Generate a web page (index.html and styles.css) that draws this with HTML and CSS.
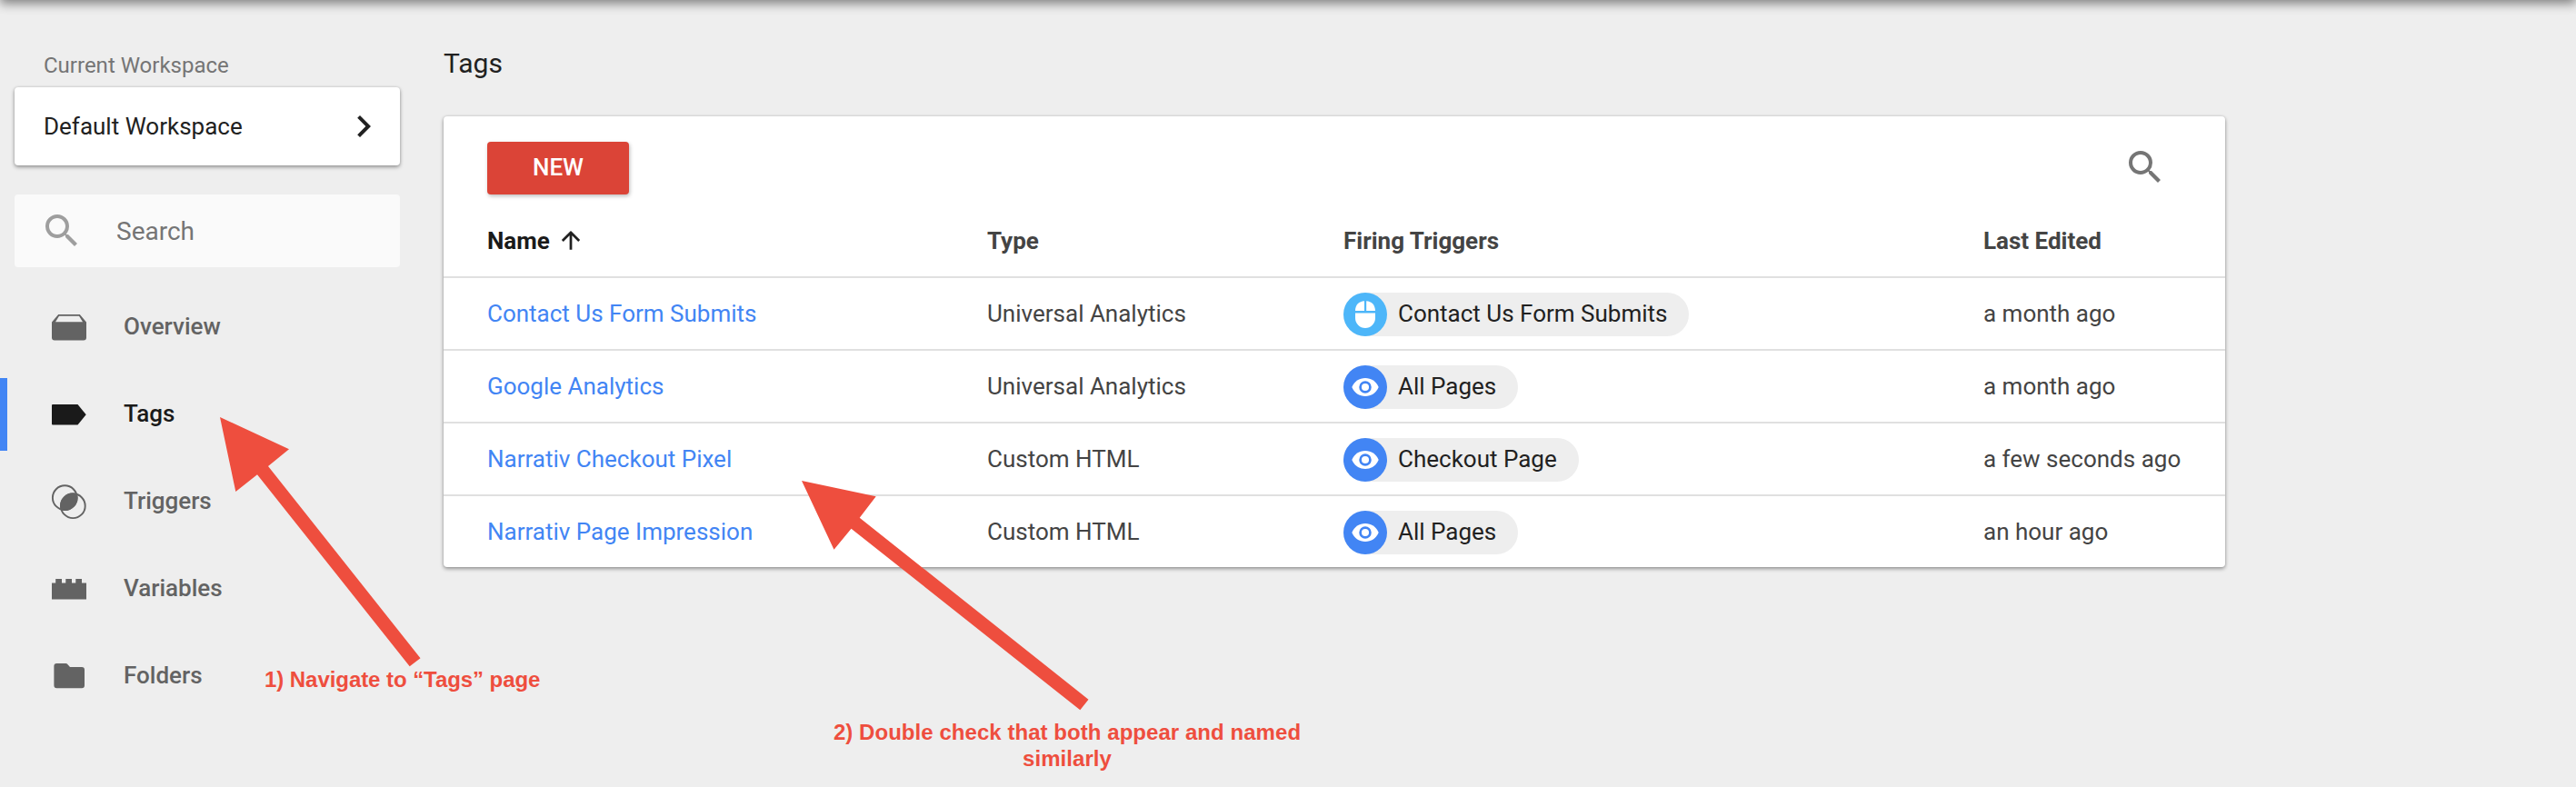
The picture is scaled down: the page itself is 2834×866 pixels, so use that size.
FILE: index.html
```html
<!DOCTYPE html>
<html lang="en">
<head>
<meta charset="utf-8">
<title>Tags</title>
<link rel="stylesheet" href="styles.css">
</head>
<body>
<div class="topbar-shadow"></div>
<div class="layout">
  <aside class="sidebar">
    <div class="workspace-label">Current Workspace</div>
    <div class="workspace">
      <span>Default Workspace</span>
      <svg class="chevron" viewBox="0 0 24 24"><path d="M10 6 8.59 7.41 13.17 12l-4.58 4.59L10 18l6-6z"/></svg>
    </div>
    <div class="search">
      <svg class="search-icon" viewBox="0 0 24 24"><path d="M15.5 14h-.79l-.28-.27A6.471 6.471 0 0 0 16 9.5 6.5 6.5 0 1 0 9.5 16c1.61 0 3.09-.59 4.23-1.57l.27.28v.79l5 4.99L20.49 19l-4.99-5zm-6 0C7.01 14 5 11.99 5 9.5S7.01 5 9.5 5 14 7.01 14 9.5 11.99 14 9.5 14z"/></svg>
      <span>Search</span>
    </div>
    <nav class="nav">
      <a class="nav-item">
        <svg class="nav-icon" viewBox="0 0 40 40"><path fill-rule="evenodd" d="M8.2 6h23.6L39 14.500V31.500a3 3 0 0 1-3 3H4a3 3 0 0 1-3-3V14.500zM9 7.700 5 14.200h30L31 7.700z"/></svg>
        <span>Overview</span>
      </a>
      <a class="nav-item active">
        <svg class="nav-icon" viewBox="0 0 40 40"><path d="M2 9h27.500L38.700 20.300 29.500 31.500H2a1 1 0 0 1-1-1V10a1 1 0 0 1 1-1z"/></svg>
        <span>Tags</span>
      </a>
      <a class="nav-item">
        <svg class="nav-icon" viewBox="0 0 40 40"><g fill="none" stroke="#636363" stroke-width="1.900"><circle cx="15.300" cy="15.700" r="13.400"/><circle cx="24.300" cy="24.700" r="13.400"/></g><path stroke="#636363" stroke-width="1.500" d="M28.100 11.900A13.400 13.400 0 0 1 11.500 28.500 13.400 13.400 0 0 1 28.100 11.900z"/></svg>
        <span>Triggers</span>
      </a>
      <a class="nav-item">
        <svg class="nav-icon" viewBox="0 0 40 40"><path d="M1 13.500h4.200V9H12v4.500h4.300V9H23v4.500h4.300V9H34v4.500h5V31.600H1z"/></svg>
        <span>Variables</span>
      </a>
      <a class="nav-item">
        <svg class="nav-icon" viewBox="0 0 40 40"><path d="M6.500 6h10a2 2 0 0 1 1.400.6L21 10h13a3 3 0 0 1 3 3v17.300a3 3 0 0 1-3 3H6.400a3 3 0 0 1-3-3V9a3 3 0 0 1 3.100-3z"/></svg>
        <span>Folders</span>
      </a>
    </nav>
  </aside>
  <main class="main">
    <h1 class="title">Tags</h1>
    <section class="card">
      <div class="toolbar">
        <button class="new">NEW</button>
        <svg class="search-icon dark" viewBox="0 0 24 24"><path d="M15.5 14h-.79l-.28-.27A6.471 6.471 0 0 0 16 9.5 6.5 6.5 0 1 0 9.5 16c1.61 0 3.09-.59 4.23-1.57l.27.28v.79l5 4.99L20.490 19l-4.990-5zm-6 0C7.010 14 5 11.990 5 9.500S7.010 5 9.500 5 14 7.010 14 9.500 11.990 14 9.500 14z"/></svg>
      </div>
      <div class="row head">
        <span class="sorted">Name <svg class="sort" viewBox="0 0 24 24"><path d="M12 22.500V2.500M2 12 12 2l10 10"/></svg></span>
        <span>Type</span><span>Firing Triggers</span><span>Last Edited</span>
      </div>
      <div class="row">
        <a>Contact Us Form Submits</a><span>Universal Analytics</span>
        <div><span class="chip"><svg class="badge" viewBox="0 0 48 48"><circle cx="24" cy="24" r="24" fill="#4db6f9"/><path fill="#fff" d="M23 9.200V20H13C13 13.500 17 9.500 23 9.200zM25.200 9.200V20H35C35 13.500 31 9.500 25.200 9.200zM13 22.500h22V28a11 11 0 0 1-22 0z"/></svg><span class="chip-label">Contact Us Form Submits</span></span></div>
        <span>a month ago</span>
      </div>
      <div class="row">
        <a>Google Analytics</a><span>Universal Analytics</span>
        <div><span class="chip"><svg class="badge" viewBox="0 0 48 48"><circle cx="24" cy="24" r="24" fill="#4285f4"/><path fill="#fff" d="M9.300 24C12 17.500 17.500 14 24 14s12 3.500 14.700 10C36 30.500 30.500 34 24 34S12 30.500 9.300 24z"/><circle cx="24" cy="24" r="5.400" fill="#fff" stroke="#4285f4" stroke-width="2.700"/></svg><span class="chip-label">All Pages</span></span></div>
        <span>a month ago</span>
      </div>
      <div class="row">
        <a>Narrativ Checkout Pixel</a><span>Custom HTML</span>
        <div><span class="chip"><svg class="badge" viewBox="0 0 48 48"><circle cx="24" cy="24" r="24" fill="#4285f4"/><path fill="#fff" d="M9.300 24C12 17.500 17.500 14 24 14s12 3.500 14.700 10C36 30.500 30.500 34 24 34S12 30.500 9.300 24z"/><circle cx="24" cy="24" r="5.400" fill="#fff" stroke="#4285f4" stroke-width="2.700"/></svg><span class="chip-label">Checkout Page</span></span></div>
        <span>a few seconds ago</span>
      </div>
      <div class="row">
        <a>Narrativ Page Impression</a><span>Custom HTML</span>
        <div><span class="chip"><svg class="badge" viewBox="0 0 48 48"><circle cx="24" cy="24" r="24" fill="#4285f4"/><path fill="#fff" d="M9.300 24C12 17.500 17.500 14 24 14s12 3.500 14.700 10C36 30.500 30.500 34 24 34S12 30.500 9.300 24z"/><circle cx="24" cy="24" r="5.400" fill="#fff" stroke="#4285f4" stroke-width="2.700"/></svg><span class="chip-label">All Pages</span></span></div>
        <span>an hour ago</span>
      </div>
    </section>
  </main>
</div>
<svg class="arrows" viewBox="0 0 2834 866"><path d="M242 459 318 494.300 295 513 462.500 724.300 450.700 733.300 283 522.300 259.300 541zM882 529 963.700 546.300 945.700 569.700 1197.500 769.700 1188.300 781.300 936.500 581.700 917.500 604.700z"/></svg>
<div class="note note-one">1) Navigate to “Tags” page</div>
<div class="note note-two">2) Double check that both appear and named similarly</div>
</body>
</html>
```

FILE: styles.css
```css
* { box-sizing: border-box; }
body {
  margin: 0;
  height: 866px;
  overflow: hidden;
  position: relative;
  background: #eee;
  color: #212121;
  font: 26px/32px Roboto, sans-serif;
}
.topbar-shadow {
  position: absolute;
  top: -20px;
  left: 0;
  right: 0;
  height: 20px;
  box-shadow: 0 4px 12px rgba(0, 0, 0, .46);
}
.layout { display: flex; gap: 48px; }
.sidebar { width: 440px; padding-top: 56px; }
.workspace-label { height: 40px; padding-left: 48px; font-size: 24px; color: #757575; }
.workspace, .search {
  display: flex;
  align-items: center;
  margin-left: 16px;
  border-radius: 4px;
}
.workspace {
  height: 86px;
  padding: 0 16px 0 32px;
  justify-content: space-between;
  background: #fff;
  box-shadow: 0 2px 4px rgba(0, 0, 0, .36), 0 0 3px rgba(0, 0, 0, .14);
}
.chevron { width: 48px; height: 48px; fill: #212121; }
.search {
  height: 80px;
  margin-top: 32px;
  padding-left: 28px;
  gap: 36px;
  background: #fafafa;
  color: #757575;
  font-size: 28px;
}
.search span { padding-top: 2px; }
.search-icon { width: 48px; height: 48px; fill: #9e9e9e; }
.search-icon.dark { fill: #757575; }
.nav { display: flex; flex-direction: column; gap: 16px; margin-top: 26px; }
.nav-item {
  display: flex;
  align-items: center;
  gap: 40px;
  height: 80px;
  padding-left: 48px;
  border-left: 8px solid transparent;
  color: #636363;
  font-weight: 500;
}
.nav-item span { padding-bottom: 2px; }
.nav-item.active { border-color: #4285f4; color: #1a1a1a; }
.nav-icon { width: 40px; height: 40px; fill: currentColor; }
.main { width: 1960px; padding-top: 52px; }
.title { margin: 0; height: 76px; font-size: 30px; line-height: 36px; font-weight: 400; }
.card {
  height: 496px;
  background: #fff;
  border-radius: 4px;
  box-shadow: 0 2px 4px rgba(0, 0, 0, .36), 0 0 3px rgba(0, 0, 0, .14);
}
.toolbar { display: flex; justify-content: space-between; height: 96px; padding: 28px 64px 0 48px; }
.toolbar .search-icon { margin-top: 4px; }
.new {
  width: 156px;
  height: 58px;
  padding: 0 0 2px;
  border: 0;
  border-radius: 4px;
  background: #db4437;
  color: #fff;
  font: 500 26px/56px Roboto, sans-serif;
  box-shadow: 1px 2px 4px rgba(0, 0, 0, .26);
}
.row {
  display: grid;
  grid-template-columns: 550px 392px 704px 1fr;
  align-items: center;
  height: 80px;
  padding: 0 0 0 48px;
  border-top: 2px solid #e0e0e0;
  color: #444;
}
.row a { color: #4285f4; }
.row.head { border-color: transparent; font-weight: 700; }
.sorted { display: flex; align-items: center; gap: 12px; color: #1a1a1a; }
.sort { width: 22px; height: 24px; fill: none; stroke: #212121; stroke-width: 3; }
.chip {
  display: inline-flex;
  align-items: center;
  gap: 12px;
  height: 48px;
  padding-right: 24px;
  border-radius: 24px;
  background: #eee;
  color: #212121;
  vertical-align: top;
  position: relative;
  top: 1px;
}
.chip-label { padding-bottom: 2px; }
.badge { width: 48px; height: 48px; }
.arrows { position: absolute; inset: 0; width: 2834px; height: 866px; fill: #ee4e3e; }
.note {
  position: absolute;
  color: #ee4e3e;
  font: 700 24px/29px "Liberation Sans", Arial, sans-serif;
  text-align: center;
}
.note-one { left: 291px; top: 733px; white-space: nowrap; letter-spacing: -.06px; }
.note-two { left: 904px; top: 791px; width: 540px; letter-spacing: .05px; }
```
